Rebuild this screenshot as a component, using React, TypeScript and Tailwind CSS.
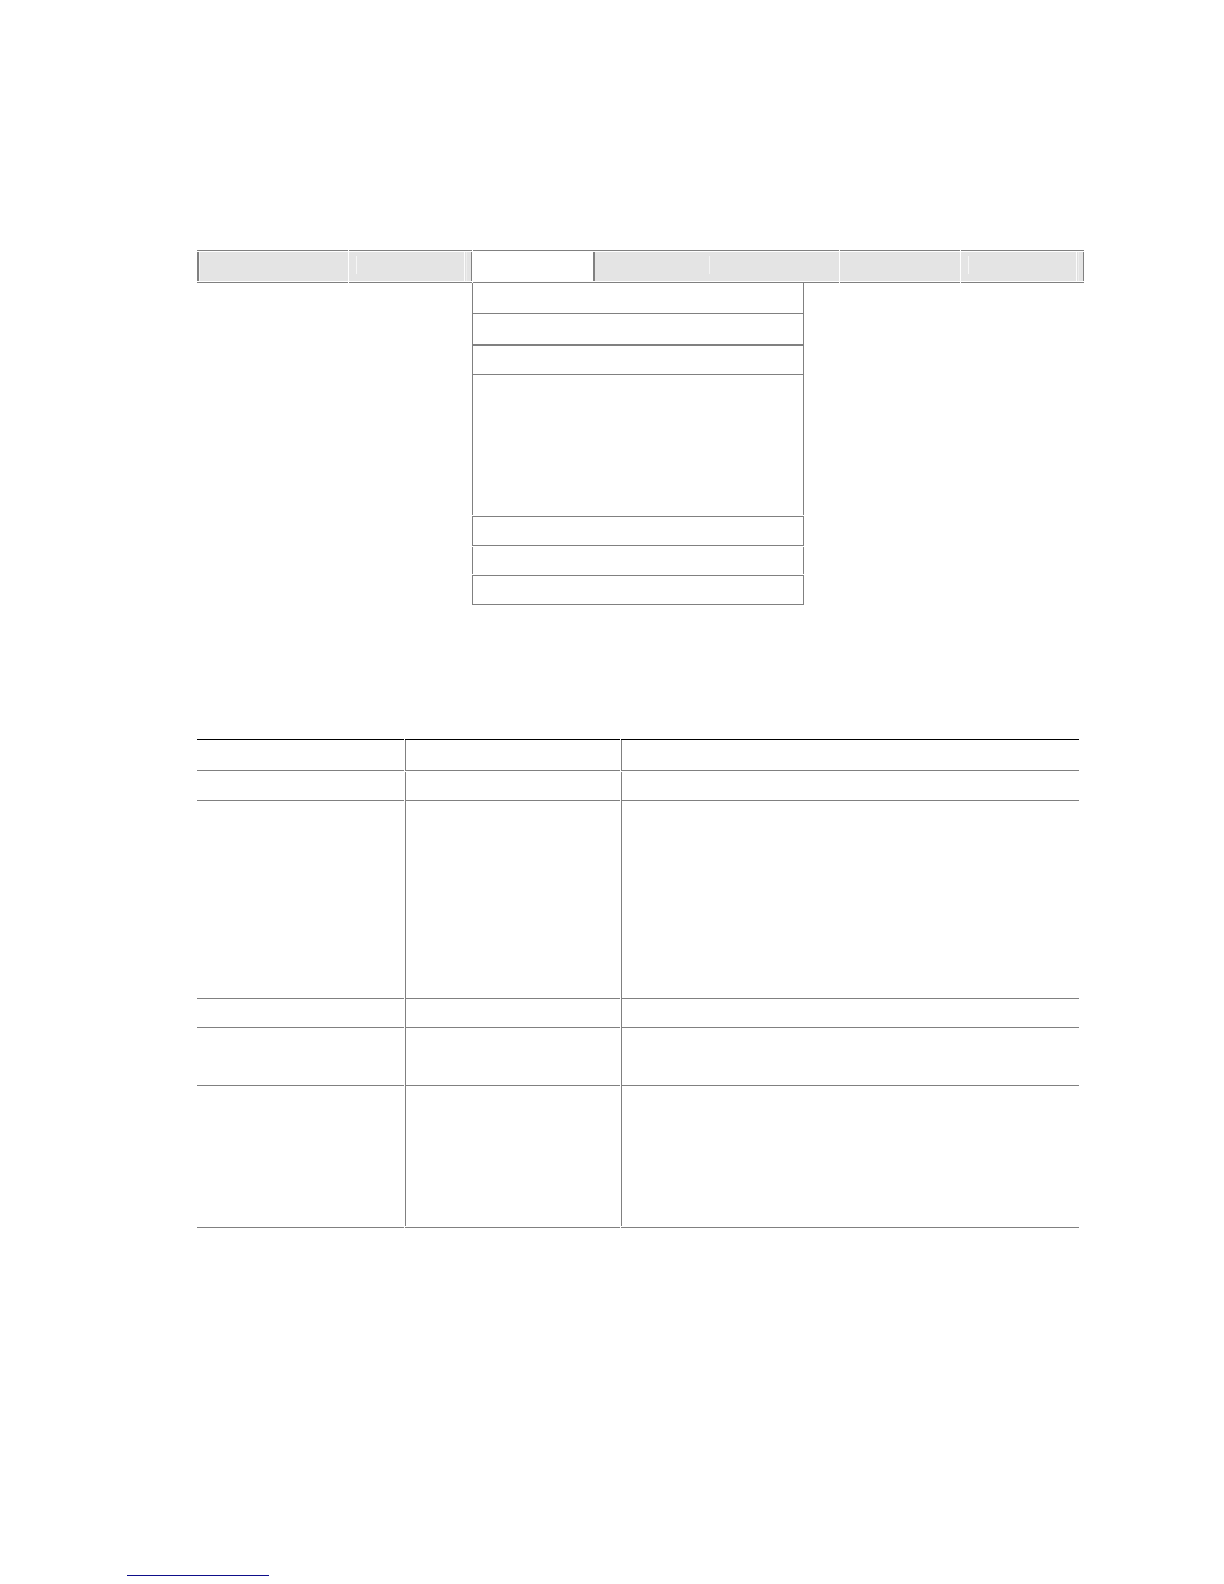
type BarItem = {
  label: string;
  gap: string;
  face: string;
  marks?: 'edges' | 'middle' | 'start';
};

const barItems: BarItem[] = [
  { label: 'First menu', gap: 'mr-px', face: 'border-l-2 border-[#808080] bg-[#e4e4e4]', marks: 'start' },
  { label: 'Second menu', gap: 'mr-px', face: 'border-r border-[#808080] bg-[#e4e4e4]', marks: 'edges' },
  { label: 'Open menu', gap: '', face: 'bg-white' },
  { label: 'Fourth menu', gap: 'mr-px', face: 'border-l-2 border-[#808080] bg-[#e4e4e4]', marks: 'middle' },
  { label: 'Fifth menu', gap: 'mr-px', face: 'bg-[#e4e4e4]' },
  { label: 'Sixth menu', gap: '', face: 'border-r border-[#808080] bg-[#e4e4e4]', marks: 'edges' },
];

const menuRows = [
  'h-[31px] border-x border-b',
  'h-8 border-x border-b-2',
  'h-[29px] border-x border-b',
  'h-[140px] border-x',
  'mt-px h-[30px] border',
  'mt-px h-[27px] border-x',
  'mt-px h-[30px] border',
];

const tableRows = [
  { line: 'border-t border-t-black border-b border-b-[#808080]', body: 'h-[30px]' },
  { line: 'border-b border-[#808080] pt-px', body: 'h-7' },
  { line: 'border-b border-[#808080]', body: 'h-[197px]' },
  { line: 'border-b border-[#808080]', body: 'h-7' },
  { line: 'border-b border-[#808080]', body: 'h-[57px]' },
  { line: 'border-b border-[#808080] pb-px', body: 'h-[140px]' },
];

function MenuBar() {
  return (
    <nav className="grid grid-cols-[152fr_124fr_120fr_247fr_121fr_123fr]">
      {barItems.map((item) => (
        <button
          key={item.label}
          type="button"
          aria-label={item.label}
          className={`border-y border-[#808080] py-px ${item.gap}`}
        >
          <span className={`flex h-[29px] ${item.face}`}>
            {item.marks === 'start' && <span className="w-px bg-[#f2f2f2]" />}
            {item.marks === 'edges' && (
              <span className="flex flex-1 justify-between pr-1 pl-[7px]">
                <span className="mt-1 h-[18px] w-px bg-[#f6f6f6]" />
                <span className="w-[3px] border-r border-l border-l-[#fcfcfc] border-r-[#ededed] bg-[#e0e0e0]" />
              </span>
            )}
            {item.marks === 'middle' && (
              <span className="mt-1 ml-[114px] h-[18px] w-px bg-[#f4f4f4]" />
            )}
          </span>
        </button>
      ))}
    </nav>
  );
}

function OpenMenu() {
  return (
    <div className="grid grid-cols-[275fr_332fr_280fr]">
      <ul className="col-start-2">
        {menuRows.map((row, i) => (
          <li key={i} className={`border-[#808080] ${row}`} />
        ))}
      </ul>
    </div>
  );
}

function SummaryTable() {
  return (
    <div className="mt-[134px] pr-[5px]">
      <table className="w-full table-fixed border-separate border-spacing-0">
        <colgroup>
          <col className="w-[208px]" />
          <col className="w-[216px]" />
          <col />
        </colgroup>
        <tbody>
          {tableRows.map((row, i) => (
            <tr key={i}>
              <td className="p-0">
                <div className={`mr-px ${row.line}`}>
                  <div className={row.body} />
                </div>
              </td>
              <td className="p-0">
                <div className={`mr-px ${row.line}`}>
                  <div className={`border-l border-[#808080] ${row.body}`} />
                </div>
              </td>
              <td className="p-0">
                <div className={row.line}>
                  <div className={`border-l border-[#808080] ${row.body}`} />
                </div>
              </td>
            </tr>
          ))}
        </tbody>
      </table>
    </div>
  );
}

export default function App() {
  return (
    <div className="bg-white pt-[250px] pb-2 font-['Liberation_Sans',sans-serif]">
      <main className="pr-[140px] pl-[197px]">
        <MenuBar />
        <OpenMenu />
        <SummaryTable />
      </main>
      <footer className="mt-[331px] pl-[127px]">
        <a href="#top" aria-label="Back to top" className="block h-[17px] w-[142px] border-b border-[#0e0e8a]" />
      </footer>
    </div>
  );
}
